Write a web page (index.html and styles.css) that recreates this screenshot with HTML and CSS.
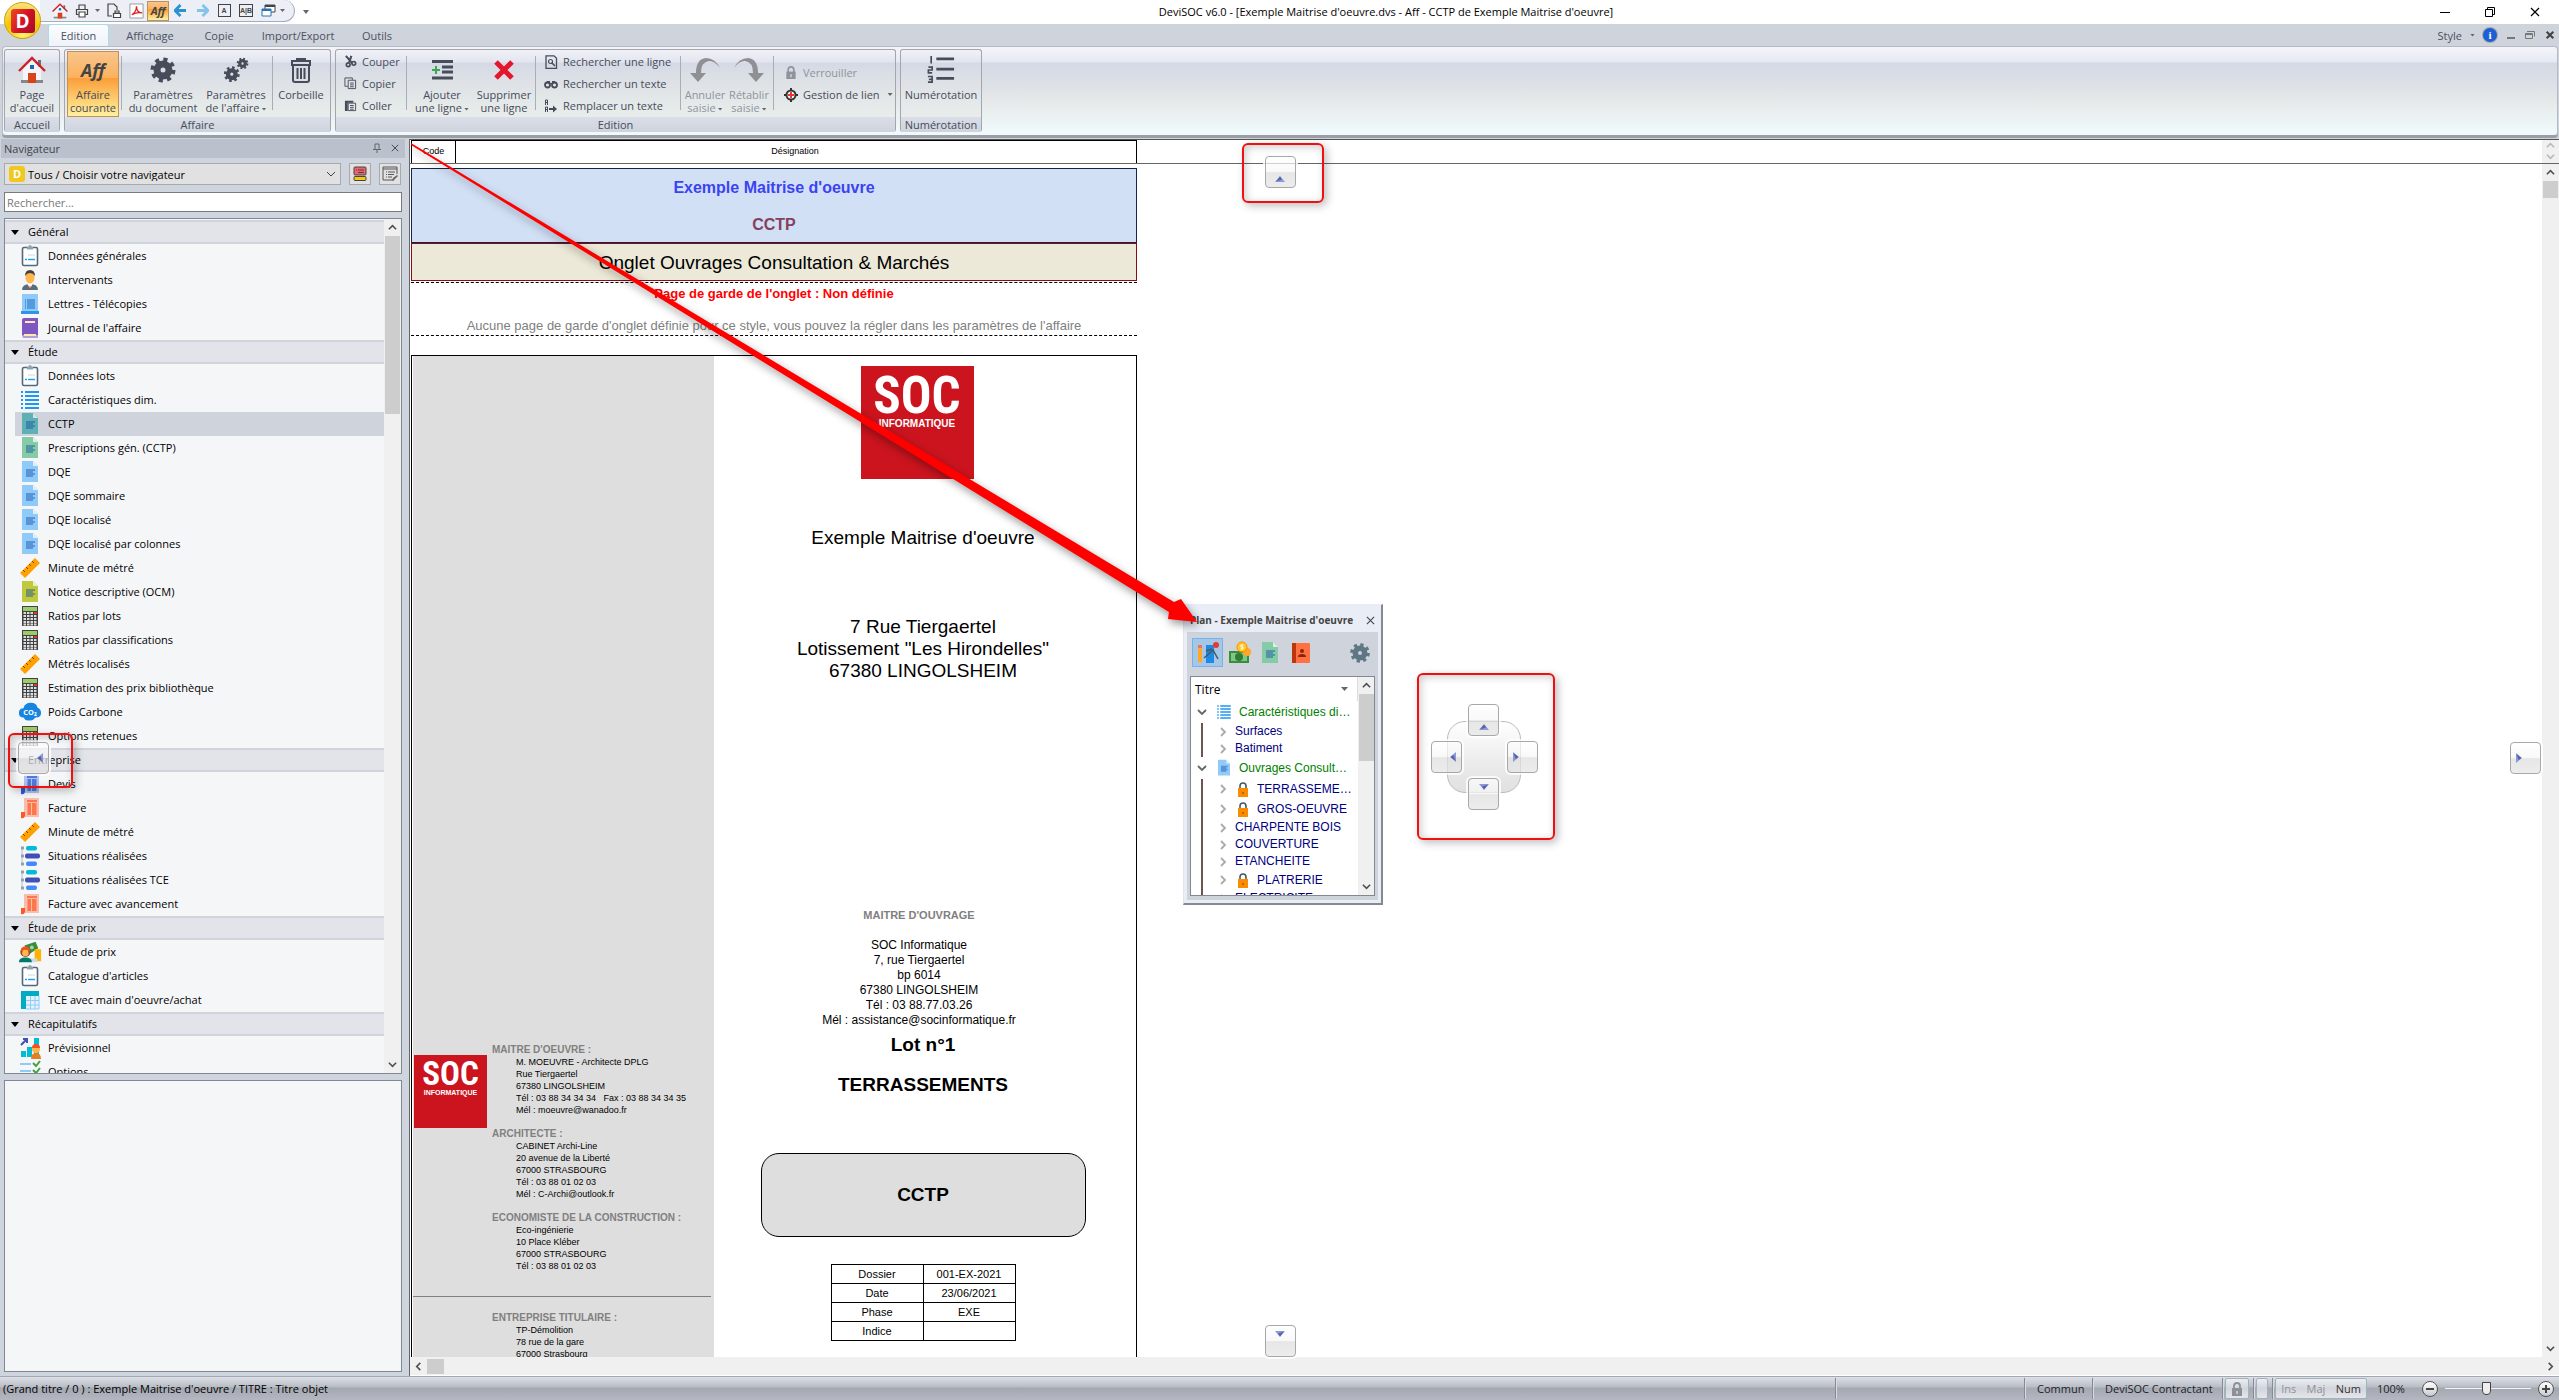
FILE: index.html
```html
<!DOCTYPE html>
<html lang="fr">
<head>
<meta charset="utf-8">
<meta name="viewport" content="width=device-width, initial-scale=1">
<title>DeviSOC v6.0</title>
<link rel="stylesheet" href="styles.css">
</head>
<body>
<svg class="sprite" aria-hidden="true">
  <symbol id="house" viewBox="0 0 28 28"><path d="M20 4h3v7h-3z" fill="#6b7078"/><path d="M5 13 14 4l9 9v12H5z" fill="#f4f5fb"/><path d="M3 24h22v3H3z" fill="#85878c"/><path d="M10 17h8v10h-8z" fill="#d9431a"/><path d="M12 9h4v4h-4z" fill="#1f66b5"/><path d="M1 15 14 2l13 13" fill="none" stroke="#cc2222" stroke-width="2.4"/></symbol>
  <symbol id="gear" viewBox="0 0 28 28"><circle cx="14" cy="14" r="10.5" fill="none" stroke="currentColor" stroke-width="4" stroke-dasharray="4.1 4.15"/><circle cx="14" cy="14" r="6" fill="none" stroke="currentColor" stroke-width="7"/></symbol>
  <symbol id="gears" viewBox="0 0 30 30"><use href="#gear" x="1" y="10" width="19" height="19"/><use href="#gear" x="15" y="1" width="14" height="14"/></symbol>
  <symbol id="bin" viewBox="0 0 24 26"><path d="M8 4V2h8v2M3 4h18v4H3zM4 8v15q0 2 2 2h12q2 0 2-2V8" fill="none" stroke="currentColor" stroke-width="2"/><path d="M8.500 11v11M12 11v11M15.500 11v11" stroke="currentColor" stroke-width="2"/></symbol>
  <symbol id="scissors" viewBox="0 0 14 14"><path d="M2 1l7 8M8 1 5.500 8" stroke="currentColor" stroke-width="2.200"/><circle cx="4.500" cy="10.500" r="2" fill="none" stroke="currentColor" stroke-width="1.800"/><circle cx="10.500" cy="9" r="2" fill="none" stroke="currentColor" stroke-width="1.800"/></symbol>
  <symbol id="copy" viewBox="0 0 14 14"><path d="M9 3V1H1v9h3" fill="none" stroke="currentColor"/><path d="M4.500 3.500h8v9h-8zM6.500 6.500h4M6.500 8.500h4M6.500 10.500h4" fill="none" stroke="currentColor"/></symbol>
  <symbol id="paste" viewBox="0 0 14 14"><path d="M1 2h9v2H4v9H1z" fill="currentColor"/><path d="M4.500 4.500h8v8h-8zM6.500 7h4M6.500 9h4M6.500 11h4" fill="none" stroke="currentColor"/></symbol>
  <symbol id="addline" viewBox="0 0 24 24"><path d="M2 3.500h21M12 9h11M12 14h11M2 20h21" stroke="currentColor" stroke-width="3"/><path d="M2 12h8M6 8v8" stroke="#3aa757" stroke-width="2"/></symbol>
  <symbol id="cross" viewBox="0 0 24 24"><path d="M4 4l16 16M20 4 4 20" stroke="#e3162c" stroke-width="5"/></symbol>
  <symbol id="findline" viewBox="0 0 14 14"><path d="M2 .8h8l2.500 2.500v10H2z" fill="none" stroke="currentColor" stroke-width="1.300"/><circle cx="6.500" cy="6.500" r="2" fill="none" stroke="currentColor" stroke-width="1.200"/><path d="M8 8l3 3" stroke="currentColor" stroke-width="1.500"/></symbol>
  <symbol id="binocular" viewBox="0 0 14 14"><circle cx="3.500" cy="8" r="2.500" fill="none" stroke="currentColor" stroke-width="1.800"/><circle cx="10.500" cy="8" r="2.500" fill="none" stroke="currentColor" stroke-width="1.800"/><path d="M3 4h3v3h2V4h3l1 2H2z" fill="currentColor"/></symbol>
  <symbol id="replace" viewBox="0 0 14 14"><path d="M1.500 6V1h2v5M1.500 3.500h2M1.500 13V8h2v5M1.500 10.500h2" fill="none" stroke="currentColor"/><path d="M5 9h4V6.500l4 3.500-4 3.500V11H5z" fill="currentColor"/></symbol>
  <symbol id="undo" viewBox="0 0 32 26"><path d="M31 11Q26 1 17 1 7 2 7 16H1l8 9 8-9h-5Q12 5 20 4q6 0 11 7z" fill="#8e9094"/></symbol>
  <symbol id="lock" viewBox="0 0 12 14"><path d="M1 6h10v8H1z" fill="currentColor"/><path d="M3 7V4q0-3 3-3t3 3v3" fill="none" stroke="currentColor" stroke-width="1.800"/><path d="M5.400 9h1.200v3H5.400z" fill="#e8eaee"/></symbol>
  <symbol id="padlock" viewBox="0 0 12 15"><path d="M3 7V4q0-3 3-3t3 3v3" fill="none" stroke="#455a64" stroke-width="1.600"/><path d="M1 6h10v9H1z" fill="#fb8c00"/><path d="M5 10h2v2H5z" fill="#c2600a"/></symbol>
  <symbol id="target" viewBox="0 0 14 14"><circle cx="7" cy="7" r="4.500" fill="#fff" stroke="#333" stroke-width="2"/><path d="M7 0v3M7 11v3M0 7h3M11 7h3" stroke="#333" stroke-width="2"/><path d="M7 4v6M4 7h6" stroke="#e33" stroke-width="2"/></symbol>
  <symbol id="number" viewBox="0 0 30 30"><path d="M10 3h19M10 14h19M10 24h19" stroke="currentColor" stroke-width="3"/><path d="M4.500 0v8M1.500 12h4v3h-4v3h4M1 22h4.500v6H1M2 25h3" stroke="currentColor" stroke-width="1.800" fill="none"/></symbol>
  <symbol id="printer" viewBox="0 0 14 14"><path d="M4 5V1h6v4M3.500 10.500H1.500v-5h11v5h-2" fill="none" stroke="#444" stroke-width="1.200"/><path d="M4 8h6v5H4z" fill="#fff" stroke="#444" stroke-width="1.200"/></symbol>
  <symbol id="pageprint" viewBox="0 0 16 16"><path d="M6 13H2V1h6l3 3v3" fill="none" stroke="#444" stroke-width="1.200"/><path d="M7.500 10.500h7v4h-7zM9 8h4v2H9z" fill="#fff" stroke="#444" stroke-width="1.200"/></symbol>
  <symbol id="pdf" viewBox="0 0 16 16"><path d="M1 .5h14v15H1z" fill="#fff" stroke="#999"/><path d="M3 12q5-3 5-9 0 7 6 7-6-1-11 2z" fill="none" stroke="#d22" stroke-width="1.400"/></symbol>
  <symbol id="arrow" viewBox="0 0 14 14"><path d="M7 1 1 7l6 6M1.500 7H13" fill="none" stroke="currentColor" stroke-width="3"/></symbol>
  <symbol id="windows" viewBox="0 0 15 14"><path d="M4 1h10v7H4z" fill="#fff" stroke="#444"/><path d="M4 1h10v2H4z" fill="#444"/><path d="M1 5h9v7H1z" fill="#fff" stroke="#2d72b0"/><path d="M1 5h9v2H1z" fill="#2d72b0"/></symbol>
  <symbol id="clip" viewBox="0 0 24 24"><rect x="4.500" y="3.500" width="15" height="18" rx="1.500" fill="#fff" stroke="#546a79" stroke-width="1.600"/><path d="M9 3h6v2.500H9z" fill="#90a4ae"/><circle cx="12" cy="2.500" r="1.600" fill="#90a4ae"/><path d="M10 11h7" stroke="#cfd8dc"/><path d="M7 15.500h2M10 15.500h7" stroke="#1ea4ee" stroke-width="1.500"/></symbol>
  <symbol id="person" viewBox="0 0 24 24"><path d="M4 22q0-6 8-6t8 6z" fill="#546e7a"/><path d="M9.500 16h5L12 21z" fill="#fff"/><path d="M12 17l1 4h-2z" fill="#d33"/><ellipse cx="12" cy="9.500" rx="4.500" ry="6" fill="#ffb74d"/><path d="M7 8q0-6 5-6t5 6q-2-3-5-3T7 8z" fill="#424242"/></symbol>
  <symbol id="letter" viewBox="0 0 24 24"><path d="M4 2h16v19H4z" fill="#90caf9"/><path d="M7 7h1v10H7zM9 7h8v10H9z" fill="#549ade"/><path d="M3 19h18v3H3z" fill="#2e93ee"/></symbol>
  <symbol id="book" viewBox="0 0 24 24"><path d="M4 4q0-2 2-2h14v17H4z" fill="#7e57c2"/><path d="M4 19h16v3H5z" fill="#b39ddb"/><path d="M7 5h10v2H7zM6 18h12v2H6z" fill="#ffe9b0"/></symbol>
  <symbol id="list" viewBox="0 0 24 24"><path d="M3 4h2M7 4h14M3 8h2M7 8h14M3 12h2M7 12h14M3 16h2M7 16h14M3 20h2M7 20h14" stroke="#2196f3" stroke-width="2"/></symbol>
  <symbol id="doc" viewBox="0 0 24 24"><path d="M4 1h11l5 5v16H4z" fill="currentColor"/><path d="M15 1l5 5h-5z" fill="#fff" opacity=".7"/><path d="M8 9h9v2h-2v2h2v2h-2v2H8z" fill="#0d4aa8" opacity=".42"/></symbol>
  <symbol id="ruler" viewBox="0 0 24 24"><path d="M2 17 17 2l5 5L7 22z" fill="#ffa000"/><path d="M5 14l2 2M8 11l2 2M11 8l2 2M14 5l2 2" stroke="#7a4a00"/></symbol>
  <symbol id="calc" viewBox="0 0 24 24"><path d="M4 2h16v20H4z" fill="#424242"/><path d="M5 3h14v4H5z" fill="#9ccc65"/><path d="M5.500 9h13M5.500 12h13M5.500 15h13M5.500 18h13M5.500 20.500h13" stroke="#ddd" stroke-width="2" stroke-dasharray="2.500 1"/><path d="M16 8h3v2h-3z" fill="#e53935"/></symbol>
  <symbol id="cloud" viewBox="0 0 26 24"><path d="M6 18q-5 0-5-5t5-5q1-6 8-6 6 0 7 5 4 2 4 6 0 5-6 5-3 4-7 3-4 1-6-3z" fill="#1686e0"/><text x="13" y="15" font-size="8" font-weight="bold" fill="#fff" text-anchor="middle">CO₂</text></symbol>
  <symbol id="bill" viewBox="0 0 24 24"><path d="M6 2h15v19H6z" fill="currentColor" opacity=".35"/><path d="M9 4h10v2H9zM9.500 7H13v12H9.500zM14 7h4.500v12H14z" fill="currentColor" opacity=".7"/><path d="M3 16h4v4q-1 3-4 2z" fill="currentColor"/></symbol>
  <symbol id="situation" viewBox="0 0 24 24"><path d="M4 4v16" stroke="#b0bec5"/><path d="M3 4h3M3 12h3M3 20h3" stroke="#90a4ae" stroke-width="3"/><rect x="8" y="2" width="11" height="4.500" rx="2" fill="#00bcd4"/><rect x="7" y="9.500" width="15" height="5" rx="2" fill="#3f51b5"/><rect x="8" y="17.500" width="11" height="4.500" rx="2" fill="#448aff"/></symbol>
  <symbol id="price" viewBox="0 0 26 24"><path d="M7 5l12-4 3 7-11 7z" fill="#388e3c"/><circle cx="15" cy="7" r="2" fill="#a5d6a7"/><path d="M18 9h7v13h-7z" fill="#ffb300"/><path d="M12 19h9v4h-9z" fill="#cfd8dc"/><circle cx="8" cy="12" r="5.500" fill="#8d4a24"/><path d="M3 11q0-5 5-5t5 5z" fill="#f4511e"/><circle cx="8" cy="13" r="3.500" fill="#ffb74d"/><path d="M1 23q0-5 7-5t7 5z" fill="#00796b"/></symbol>
  <symbol id="grid" viewBox="0 0 24 24"><path d="M3 3h18v18H3z" fill="#e3f2fd"/><path d="M3 3h18v5H8v13H3z" fill="#00acc1"/><path d="M12.500 8v13M17 8v13M8 12.500h13M8 17h13M21 8v13H8" stroke="#90caf9" fill="none"/></symbol>
  <symbol id="forecast" viewBox="0 0 24 24"><path d="M3 15h5v6H3zM9 11h5v10H9zM16 2h5v19h-5z" fill="#00bcd4"/><path d="M3 9l5-5M5 3h4v4" stroke="#3f51b5" stroke-width="2" fill="none"/><circle cx="18" cy="13" r="4" fill="#ffb74d"/><path d="M14 12q0-4 4-4t4 4z" fill="#f4511e"/><path d="M13 23q0-6 5-6t5 6z" fill="#e67e22"/></symbol>
  <symbol id="checks" viewBox="0 0 24 24"><path d="M2 4h11M2 11h11M2 18h11" stroke="#90caf9" stroke-width="2"/><path d="M15 3l3 3 4-5M15 10l3 3 4-5" stroke="#43a047" stroke-width="2" fill="none"/></symbol>
  <symbol id="chevron" viewBox="0 0 10 10"><path d="M1 3l4 4 4-4" fill="none" stroke="currentColor" stroke-width="1.800"/></symbol>
  <symbol id="close" viewBox="0 0 10 10"><path d="M1 1l8 8M9 1 1 9" stroke="currentColor" stroke-width="1.200"/></symbol>
  <symbol id="tri" viewBox="0 0 12 8"><path d="M1 7l5-6 5 6z" fill="#8b98dc"/><path d="M2 6.500 6 1.500l2 3z" fill="#5a63a0"/></symbol>
</svg>

<div class="app">
  <header class="titlebar">
    <button class="orb" aria-label="Menu DeviSOC"><span>D</span></button>
    <div class="quick">
      <button aria-label="Accueil"><svg width="16" height="16"><use href="#house"/></svg></button>
      <button aria-label="Imprimer"><svg width="14" height="14"><use href="#printer"/></svg></button>
      <i class="caret slot"></i>
      <button aria-label="Aperçu"><svg width="16" height="16"><use href="#pageprint"/></svg></button>
      <button aria-label="PDF"><svg width="15" height="16"><use href="#pdf"/></svg></button>
      <button class="hot aff-small">Aff</button>
      <button class="blue" aria-label="Précédent"><svg width="13" height="13"><use href="#arrow"/></svg></button>
      <button class="pale" aria-label="Suivant"><svg width="13" height="13" class="flip"><use href="#arrow"/></svg></button>
      <button><span class="framed">A</span></button>
      <button><span class="framed">A|B</span></button>
      <button aria-label="Fenêtres"><svg width="15" height="14"><use href="#windows"/></svg></button>
      <i class="caret"></i>
    </div>
    <i class="caret customise"></i>
    <h1>DeviSOC v6.0 - [Exemple Maitrise d'oeuvre.dvs - Aff - CCTP de Exemple Maitrise d'oeuvre]</h1>
    <div class="wincontrols">
      <button aria-label="Réduire"><svg width="10" height="10"><path d="M0 5.500h10" stroke="#000"/></svg></button>
      <button aria-label="Restaurer"><svg width="10" height="10"><path d="M.5 2.500h7v7h-7zM2.500 2V.5h7v7H8" fill="none" stroke="#000"/></svg></button>
      <button aria-label="Fermer"><svg width="10" height="10"><use href="#close"/></svg></button>
    </div>
  </header>

  <nav class="tabs">
    <button class="tab active">Edition</button><button class="tab">Affichage</button><button class="tab">Copie</button><button class="tab">Import/Export</button><button class="tab">Outils</button>
    <div class="tabtools">
      <button>Style</button><i class="caret"></i><span class="info">i</span>
      <svg width="8" height="10"><path d="M0 8h8" stroke="#777" stroke-width="2"/></svg>
      <svg width="10" height="10"><path d="M.5 3.500h7v5h-7zM2 1.500h7.500v5M.5 4.500h7" fill="none" stroke="#777"/></svg>
      <svg width="10" height="10" class="grey"><use href="#cross"/></svg>
    </div>
  </nav>

  <section class="ribbon">
    <div class="panel p-home">
      <div class="tools"><button class="big"><span class="ico"><svg width="28" height="28"><use href="#house"/></svg></span><span>Page<br>d'accueil</span></button></div>
      <h2>Accueil</h2>
    </div>
    <div class="panel p-affair">
      <div class="tools">
        <button class="big hot w-52"><span class="ico aff">Aff</span><span>Affaire<br>courante</span></button><i class="sep"></i>
        <button class="big w-78"><span class="ico"><svg width="28" height="28"><use href="#gear"/></svg></span><span>Paramètres<br>du document</span></button>
        <button class="big w-68"><span class="ico"><svg width="28" height="28"><use href="#gears"/></svg></span><span>Paramètres<br>de l'affaire<i class="caret"></i></span></button><i class="sep"></i>
        <button class="big w-52"><span class="ico"><svg width="24" height="26"><use href="#bin"/></svg></span><span>Corbeille</span></button>
      </div>
      <h2>Affaire</h2>
    </div>
    <div class="panel p-edit">
      <div class="tools">
        <div class="stack w-66">
          <button><svg width="13" height="13"><use href="#scissors"/></svg>Couper</button>
          <button><svg width="13" height="13"><use href="#copy"/></svg>Copier</button>
          <button><svg width="13" height="13"><use href="#paste"/></svg>Coller</button>
        </div><i class="sep"></i>
        <button class="big w-66"><span class="ico"><svg width="24" height="24"><use href="#addline"/></svg></span><span>Ajouter<br>une ligne<i class="caret"></i></span></button>
        <button class="big w-58"><span class="ico"><svg width="24" height="24"><use href="#cross"/></svg></span><span>Supprimer<br>une ligne</span></button><i class="sep"></i>
        <div class="stack find">
          <button><svg width="14" height="14"><use href="#findline"/></svg>Rechercher une ligne</button>
          <button><svg width="14" height="14"><use href="#binocular"/></svg>Rechercher un texte</button>
          <button><svg width="14" height="14"><use href="#replace"/></svg>Remplacer un texte</button>
        </div><i class="sep"></i>
        <button class="big off w-44" disabled><span class="ico"><svg width="32" height="26"><use href="#undo"/></svg></span><span>Annuler<br>saisie<i class="caret"></i></span></button>
        <button class="big off w-44" disabled><span class="ico"><svg width="32" height="26" class="flip"><use href="#undo"/></svg></span><span>Rétablir<br>saisie<i class="caret"></i></span></button><i class="sep"></i>
        <div class="stack mid">
          <button class="off" disabled><svg width="14" height="13"><use href="#lock"/></svg>Verrouiller</button>
          <button><svg width="14" height="14"><use href="#target"/></svg>Gestion de lien<i class="caret"></i></button>
        </div>
      </div>
      <h2>Edition</h2>
    </div>
    <div class="panel p-num">
      <div class="tools"><button class="big"><span class="ico"><svg width="30" height="28"><use href="#number"/></svg></span><span>Numérotation</span></button></div>
      <h2>Numérotation</h2>
    </div>
  </section>

  <main class="main">
    <aside class="nav">
      <header class="nav-title"><span>Navigateur</span>
        <svg width="8" height="10"><path d="M2 1h4v5M2 1v5M0 6.500h8M4 7v3" fill="none" stroke="#666"/></svg>
        <svg width="8" height="8"><use href="#close"/></svg></header>
      <div class="picker">
        <label class="combo"><span class="d-badge">D</span>
          <select aria-label="Navigateur"><option>Tous / Choisir votre navigateur</option></select>
          <svg width="9" height="9"><path d="M0 2l4 4 4-4" fill="none" stroke="#444"/></svg></label>
        <button aria-label="Blocs"><svg width="14" height="16"><rect x="1" y="1" width="12" height="8" rx="1" fill="#f4606c" stroke="#444"/><path d="M3 4h1M5 4h6M5 6.500h6" stroke="#444"/><rect x="1" y="10.500" width="12" height="4" rx="1" fill="#f5c518" stroke="#444"/></svg></button>
        <button aria-label="Modifier"><svg width="17" height="16"><path d="M12 14H1V1h14v7M1 3h14M4 6h1M6 6h7M4 8.500h1M6 8.500h6M4 11h1M6 11h4" fill="none" stroke="#555"/><path d="M10 15l1-3 4-3 1 1-4 4z" fill="#666"/></svg></button>
      </div>
      <input class="search" type="search" placeholder="Rechercher..." aria-label="Rechercher">
      <div class="tree">
        <div class="tree-list">
          <button class="group">Général</button>
          <a href="#"><svg><use href="#clip"/></svg>Données générales</a>
          <a href="#"><svg><use href="#person"/></svg>Intervenants</a>
          <a href="#"><svg><use href="#letter"/></svg>Lettres - Télécopies</a>
          <a href="#"><svg><use href="#book"/></svg>Journal de l'affaire</a>
          <button class="group">Étude</button>
          <a href="#"><svg><use href="#clip"/></svg>Données lots</a>
          <a href="#"><svg><use href="#list"/></svg>Caractéristiques dim.</a>
          <a href="#" class="selected"><svg class="teal"><use href="#doc"/></svg>CCTP</a>
          <a href="#"><svg class="green"><use href="#doc"/></svg>Prescriptions gén. (CCTP)</a>
          <a href="#"><svg class="sky"><use href="#doc"/></svg>DQE</a>
          <a href="#"><svg class="sky"><use href="#doc"/></svg>DQE sommaire</a>
          <a href="#"><svg class="sky"><use href="#doc"/></svg>DQE localisé</a>
          <a href="#"><svg class="sky"><use href="#doc"/></svg>DQE localisé par colonnes</a>
          <a href="#"><svg><use href="#ruler"/></svg>Minute de métré</a>
          <a href="#"><svg class="lime"><use href="#doc"/></svg>Notice descriptive (OCM)</a>
          <a href="#"><svg><use href="#calc"/></svg>Ratios par lots</a>
          <a href="#"><svg><use href="#calc"/></svg>Ratios par classifications</a>
          <a href="#"><svg><use href="#ruler"/></svg>Métrés localisés</a>
          <a href="#"><svg><use href="#calc"/></svg>Estimation des prix bibliothèque</a>
          <a href="#"><svg><use href="#cloud"/></svg>Poids Carbone</a>
          <a href="#"><svg><use href="#calc"/></svg>Options retenues</a>
          <button class="group">Entreprise</button>
          <a href="#"><svg class="indigo"><use href="#bill"/></svg>Devis</a>
          <a href="#"><svg class="orange"><use href="#bill"/></svg>Facture</a>
          <a href="#"><svg><use href="#ruler"/></svg>Minute de métré</a>
          <a href="#"><svg><use href="#situation"/></svg>Situations réalisées</a>
          <a href="#"><svg><use href="#situation"/></svg>Situations réalisées TCE</a>
          <a href="#"><svg class="orange"><use href="#bill"/></svg>Facture avec avancement</a>
          <button class="group">Étude de prix</button>
          <a href="#"><svg><use href="#price"/></svg>Étude de prix</a>
          <a href="#"><svg><use href="#clip"/></svg>Catalogue d'articles</a>
          <a href="#"><svg><use href="#grid"/></svg>TCE avec main d'oeuvre/achat</a>
          <button class="group">Récapitulatifs</button>
          <a href="#"><svg><use href="#forecast"/></svg>Prévisionnel</a>
          <a href="#"><svg><use href="#checks"/></svg>Options</a>
        </div>
        <div class="vbar"><svg class="up"><use href="#chevron"/></svg><i class="thumb tall"></i><svg class="end"><use href="#chevron"/></svg></div>
      </div>
      <div class="blank"></div>
    </aside>

    <section class="doc">
      <div class="colhead"><div class="cols"><span class="code">Code</span><span class="desig">Désignation</span></div>
        <div class="vbar dim"><svg class="up"><use href="#chevron"/></svg><svg><use href="#chevron"/></svg></div></div>
      <div class="docbody">
        <div class="paper">
          <div class="banner"><p>Exemple Maitrise d'oeuvre</p><p class="plum">CCTP</p></div>
          <div class="onglet">Onglet Ouvrages Consultation &amp; Marchés</div>
          <div class="garde"><p class="red">Page de garde de l'onglet : Non définie</p><p>Aucune page de garde d'onglet définie pour ce style, vous pouvez la régler dans les paramètres de l'affaire</p></div>
          <article class="cover">
            <div class="credits">
              <div class="logo small"><b>SOC</b><span>INFORMATIQUE</span></div>
              <div class="parties">
                <h3>MAITRE D'OEUVRE :</h3>
                <p>M. MOEUVRE - Architecte DPLG<br>Rue Tiergaertel<br>67380 LINGOLSHEIM<br>Tél : 03 88 34 34 34 &nbsp; Fax : 03 88 34 34 35<br>Mél : moeuvre@wanadoo.fr</p>
                <h3>ARCHITECTE :</h3>
                <p>CABINET Archi-Line<br>20 avenue de la Liberté<br>67000 STRASBOURG<br>Tél : 03 88 01 02 03<br>Mél : C-Archi@outlook.fr</p>
                <h3>ECONOMISTE DE LA CONSTRUCTION :</h3>
                <p>Eco-ingénierie<br>10 Place Kléber<br>67000 STRASBOURG<br>Tél : 03 88 01 02 03</p>
              </div>
              <div class="parties holder">
                <h3>ENTREPRISE TITULAIRE :</h3>
                <p>TP-Démolition<br>78 rue de la gare<br>67000 Strasbourg</p>
              </div>
            </div>
            <div class="front">
              <div class="logo"><b>SOC</b><span>INFORMATIQUE</span></div>
              <p class="large name">Exemple Maitrise d'oeuvre</p>
              <p class="large address">7 Rue Tiergaertel<br>Lotissement "Les Hirondelles"<br>67380 LINGOLSHEIM</p>
              <h3>MAITRE D'OUVRAGE</h3>
              <p class="owner">SOC Informatique<br>7, rue Tiergaertel<br>bp 6014<br>67380 LINGOLSHEIM<br>Tél : 03 88.77.03.26<br>Mél : assistance@socinformatique.fr</p>
              <p class="large strong lot">Lot n°1</p>
              <p class="large strong">TERRASSEMENTS</p>
              <div class="large strong stamp">CCTP</div>
              <table><tr><th>Dossier</th><td>001-EX-2021</td></tr><tr><th>Date</th><td>23/06/2021</td></tr><tr><th>Phase</th><td>EXE</td></tr><tr><th>Indice</th><td></td></tr></table>
            </div>
          </article>
        </div>
        <div class="vbar"><svg class="up"><use href="#chevron"/></svg><i class="thumb short"></i><svg class="end"><use href="#chevron"/></svg></div>
      </div>
      <div class="hbar"><svg class="left"><use href="#chevron"/></svg><i></i><svg class="right end"><use href="#chevron"/></svg></div>
    </section>

    <aside class="plan">
      <header><h2>Plan - Exemple Maitrise d'oeuvre</h2><svg width="9" height="9"><use href="#close"/></svg></header>
      <div class="plan-body">
        <div class="plan-tools">
          <button class="on" aria-label="Métrés"><svg width="24" height="24"><path d="M2 6h4v15H2z" fill="#ffa726"/><path d="M2 4h4v3H2z" fill="#e57373"/><path d="M10 4h8v18h-8z" fill="#1e88e5"/><path d="M8 17l9-8 5 9M10 10l6-2" stroke="#455a64" stroke-width="1.500" fill="none"/><circle cx="20" cy="4" r="3" fill="#e53935"/></svg></button>
          <button aria-label="Prix"><svg width="24" height="24"><path d="M2 10h20v12H2z" fill="#388e3c"/><path d="M4 12h16v8H4z" fill="#81c784"/><circle cx="12" cy="16" r="4" fill="#2e7d32"/><circle cx="20" cy="11" r="4" fill="#ffa726"/><circle cx="15" cy="6" r="5" fill="#ffca28" stroke="#fb8c00"/><path d="M14 4h2.500M14 4v2h2v2h-2.500" stroke="#fff" fill="none"/></svg></button>
          <button class="green" aria-label="CCTP"><svg width="24" height="24"><use href="#doc"/></svg></button>
          <button aria-label="Contacts"><svg width="22" height="22"><rect x="2" y="1" width="18" height="20" rx="1" fill="#ff7043"/><path d="M2 1h4v20H2z" fill="#bf360c"/><circle cx="12" cy="9" r="2" fill="#8e2407"/><path d="M8 15q0-3 4-3t4 3z" fill="#8e2407"/></svg></button>
          <button class="setup" aria-label="Réglages"><svg width="22" height="22"><use href="#gear"/></svg></button>
        </div>
        <div class="plan-tree">
          <div class="plan-list">
            <div class="plan-head">Titre<i class="caret"></i></div>
            <div class="node root"><svg class="exp"><use href="#chevron"/></svg><svg class="pic"><use href="#list"/></svg>Caractéristiques di…</div>
            <div class="kids">
              <div class="node"><svg class="exp"><use href="#chevron"/></svg>Surfaces</div>
              <div class="node"><svg class="exp"><use href="#chevron"/></svg>Batiment</div>
            </div>
            <div class="node root"><svg class="exp"><use href="#chevron"/></svg><svg class="pic sky"><use href="#doc"/></svg>Ouvrages Consult…</div>
            <div class="kids">
              <div class="node locked"><svg class="exp"><use href="#chevron"/></svg><svg class="padlock"><use href="#padlock"/></svg>TERRASSEME…</div>
              <div class="node locked"><svg class="exp"><use href="#chevron"/></svg><svg class="padlock"><use href="#padlock"/></svg>GROS-OEUVRE</div>
              <div class="node"><svg class="exp"><use href="#chevron"/></svg>CHARPENTE BOIS</div>
              <div class="node"><svg class="exp"><use href="#chevron"/></svg>COUVERTURE</div>
              <div class="node"><svg class="exp"><use href="#chevron"/></svg>ETANCHEITE</div>
              <div class="node locked"><svg class="exp"><use href="#chevron"/></svg><svg class="padlock"><use href="#padlock"/></svg>PLATRERIE</div>
              <div class="node"><svg class="exp"><use href="#chevron"/></svg>ELECTRICITE</div>
            </div>
          </div>
          <div class="vbar"><svg class="up"><use href="#chevron"/></svg><i class="thumb medium"></i><svg class="end"><use href="#chevron"/></svg></div>
        </div>
      </div>
    </aside>

    <button class="guide g-top" aria-label="Ancrer en haut"><svg><use href="#tri"/></svg></button>
    <button class="guide g-bottom" aria-label="Ancrer en bas"><svg><use href="#tri"/></svg></button>
    <button class="guide g-left" aria-label="Ancrer à gauche"><svg><use href="#tri"/></svg></button>
    <button class="guide g-right" aria-label="Ancrer à droite"><svg><use href="#tri"/></svg></button>
    <div class="mark m-top"></div>
    <div class="mark m-left"></div>
    <div class="mark m-cross">
      <div class="compass">
        <button class="guide c-up" aria-label="Haut"><svg><use href="#tri"/></svg></button>
        <button class="guide c-left" aria-label="Gauche"><svg><use href="#tri"/></svg></button>
        <button class="guide c-right" aria-label="Droite"><svg><use href="#tri"/></svg></button>
        <button class="guide c-down" aria-label="Bas"><svg><use href="#tri"/></svg></button>
      </div>
    </div>
    <svg class="pointer" width="1240" height="520" aria-hidden="true"><path d="M411 4 1174 463 1181 460 1197 483 1168 480 1169 473 411 6z" fill="#f00"/></svg>
  </main>

  <footer class="status">
    <span class="msg">(Grand titre / 0 ) : Exemple Maitrise d'oeuvre / TITRE : Titre objet</span>
    <span class="cell spare"></span>
    <span class="cell commun">Commun</span>
    <span class="cell role">DeviSOC Contractant</span>
    <span class="cell chips"><i class="chip lockchip"><svg width="12" height="14"><use href="#lock"/></svg></i></span>
    <span class="cell chips"><i class="chip empty"></i></span>
    <span class="cell chips"><i class="chip keys"><span>Ins</span><span>Maj</span><span class="lit">Num</span></i></span>
    <span class="pct">100%</span>
    <button class="round" aria-label="Zoom arrière"><svg width="10" height="10"><path d="M1 5h8" stroke="#444" stroke-width="2"/></svg></button>
    <input class="zoom" type="range" aria-label="Zoom" min="0" max="100" value="48">
    <button class="round" aria-label="Zoom avant"><svg width="10" height="10"><path d="M1 5h8M5 1v8" stroke="#444" stroke-width="2"/></svg></button>
  </footer>
</div>
</body>
</html>
```
FILE: styles.css
```css
* { box-sizing: border-box; }
body { margin: 0; font: 11px/13px "Open Sans", "Noto Sans", sans-serif; color: #000; }
h1, h2, h3, p { margin: 0; font-size: inherit; }
h1, h2 { font-weight: normal; }
button { margin: 0; padding: 0; border: 0; background: none; font: inherit; color: inherit; }
i { font-style: normal; }
svg { display: block; flex: none; }
.sprite { position: absolute; width: 0; height: 0; }
.app { display: flex; flex-direction: column; height: 100vh; overflow: hidden; background: #cfd3dc; }

.caret { display: inline-block; flex: none; width: 5px; height: 3px; margin-left: 3px; background: #666; clip-path: polygon(0 0, 100% 0, 50% 100%); vertical-align: middle; }
.flip { transform: scaleX(-1); }
.teal { color: #5fb0b5; }
.green { color: #86cba6; }
.sky { color: #90caf9; }
.lime { color: #c0c93c; }
.indigo { color: #2a5bd7; }
.orange { color: #ff5722; }
.hot { background: linear-gradient(#f9c48c, #fbb25e 40%, #fb9d38 41%, #fdd77a 80%, #fff0a0); border: 1px solid #c09058; }

/* Title bar */
.titlebar { position: relative; display: flex; align-items: center; flex: none; height: 24px; background: #fff; }
.orb { position: absolute; z-index: 2; left: 4px; top: 2px; width: 37px; height: 37px; border-radius: 50%; border: 1px solid #c8a200; background: radial-gradient(circle at 50% 90%, #fff27a, #f4c400 45%, #f9df6a 80%, #fff6c8); display: grid; place-items: center; }
.orb span { width: 24px; height: 24px; border-radius: 3px; background: linear-gradient(120deg, #f04a1c, #d01028 55%, #a00c2c); color: #fff; font: bold 19px/24px "Open Sans", sans-serif; }
.quick { display: flex; align-items: center; align-self: flex-start; height: 22px; width: 255px; margin-left: 40px; padding-left: 9px; background: #eceff5; border: 1px solid #a5abb8; border-left: 0; border-top: 0; border-radius: 0 11px 11px 0; }
.quick button { display: grid; place-items: center; flex: none; width: 22px; height: 20px; }
.slot { margin: 0 3px 0 2px; }
.quick .caret:last-child { margin-left: 1px; }
.aff-small, .aff { font-style: italic; font-weight: bold; color: #444; }
.blue { color: #2c93d0; }
.pale { color: #84c4e8; }
.framed { display: block; min-width: 13px; border: 1px solid #444; font: bold 7px/11px "Liberation Sans", sans-serif; text-align: center; color: #444; }
.customise { width: 6px; height: 4px; margin-left: 8px; }
.titlebar h1 { flex: 1; text-align: center; font-size: 11px; margin: 0 223px 0 127px; padding-bottom: 2px; }
.wincontrols { display: flex; gap: 35px; position: absolute; right: 19px; }

/* Tabs */
.tabs { display: flex; align-items: flex-end; flex: none; height: 22px; padding-left: 48px; color: #4c5160; }
.tab { height: 21px; width: 56px; }
.tab:nth-child(1) { width: 61px; }
.tab:nth-child(2) { width: 82px; }
.tab:nth-child(4) { width: 102px; }
.tab.active { height: 22px; background: linear-gradient(#fbfcfe, #eef3fa); border: 1px solid #a9dce6; border-bottom: 0; border-radius: 3px 3px 0 0; }
.tabtools { display: flex; align-items: center; gap: 10px; margin-left: auto; margin-right: 4px; height: 22px; }
.tabtools .caret { margin-left: -2px; }
.info { width: 14px; height: 14px; margin-left: -2px; border-radius: 50%; background: #1d5fd6; box-shadow: 0 0 0 1px #aaa; color: #fff; font: bold 11px/14px "Liberation Serif", serif; text-align: center; }
.grey { filter: grayscale(1); }

/* Ribbon */
.ribbon { display: flex; gap: 4px; flex: none; height: 90px; margin: 0 1px 3px 2px; padding: 2px 2px 3px 1px; border: 1px solid #c0c4cc; border-color: #b6bac4 #b6bac4 #9a9da6; border-radius: 4px; background: linear-gradient(#f4f5fa, #e6e9f2 15px, #d4d9e5 16px, #d9dde6 30px, #e6e9e9 55px, #f0f9fb 85px); color: #474b5a; box-shadow: 0 2px 0 #9c9ea6; }
.panel { display: flex; flex-direction: column; border: 1px solid #a3a6ad; border-bottom-color: #85878d; border-radius: 3px; background: linear-gradient(#f1f2f8, #e2e5ee 12px, #d4d9e5 13px, #dde1e6 30px, #e8edeb 66px); }
.p-home { width: 56px; }
.p-affair { width: 267px; }
.p-edit { width: 561px; }
.p-num { width: 82px; }
.panel h2 { height: 15px; line-height: 15px; text-align: center; background: linear-gradient(#d9dee8, #cfd3dc); }
.tools { display: flex; align-items: flex-start; justify-content: center; flex: 1; padding: 1px 2px 0; }
.p-affair .tools, .p-edit .tools { justify-content: flex-start; }
.big { display: flex; flex-direction: column; align-items: center; white-space: nowrap; flex: none; height: 66px; border: 1px solid transparent; }
.big.hot { border-color: #c09058; }
.ico { display: grid; place-items: center; height: 36px; }
.big .caret { margin-left: 2px; }
.aff { font-size: 18px; line-height: 20px; }
.sep { width: 1px; height: 54px; margin: 5px 2px 0; background: #a9adb6; }
.w-52 { width: 52px; }
.w-78 { width: 78px; }
.w-68 { width: 68px; }
.w-66 { width: 66px; }
.w-58 { width: 58px; }
.w-44 { width: 44px; }
.stack { display: flex; flex-direction: column; flex: none; height: 66px; padding-left: 6px; }
.stack.find { width: 140px; }
.stack button { display: flex; align-items: center; gap: 5px; height: 22px; padding-bottom: 1px; white-space: nowrap; }
.stack.mid { justify-content: center; padding-left: 8px; }
.off { color: #8f939c; }

/* Main area */
.main { position: relative; display: flex; flex: 1; min-height: 0; }
.nav { display: flex; flex-direction: column; flex: none; width: 410px; border-right: 1px solid #666; padding-bottom: 4px; background: #cfd5df; }
.nav-title { display: flex; align-items: center; gap: 10px; flex: none; height: 19px; margin: 0 4px 5px 1px; padding: 0 6px 1px 3px; background: #bac1cd; color: #444; }
.nav-title span { flex: 1; }
.picker { display: flex; gap: 8px; flex: none; height: 22px; margin: 0 8px 7px 4px; }
.picker > button { display: grid; place-items: center; width: 22px; border: 1px solid #a9a9a9; background: #e1e1e1; }
.combo { position: relative; display: flex; align-items: center; flex: 1; border: 1px solid #a9a9a9; background: #e1e1e1; padding: 0 4px; }
.combo select { flex: 1; appearance: none; border: 0; background: none; font: inherit; color: #000; padding: 0 3px; }
.d-badge { width: 16px; height: 16px; border-radius: 3px; background: #f0c820; color: #fff; font: bold 11px/16px "Open Sans", sans-serif; text-align: center; }
.search { flex: none; appearance: none; height: 20px; margin: 0 7px 6px 4px; padding: 0 2px; border: 1px solid #7a7a7a; background: #fff; font: inherit; }
.search::placeholder { color: #777; }
.tree, .blank { margin: 0 7px 0 4px; border: 1px solid #828790; background: #f5f6f8; }
.tree { display: flex; flex: 1; min-height: 0; }
.blank { flex: none; height: 292px; margin-top: 6px; }
.tree-list { flex: 1; overflow: hidden; padding-top: 1px; }
.tree-list a { display: flex; align-items: center; gap: 6px; height: 24px; margin-left: 10px; padding: 0 0 1px 3px; color: #000; text-decoration: none; }
.tree-list a svg { width: 24px; height: 24px; }
.tree-list .selected { background: #cfd3dc; }
.group { position: relative; display: block; width: 100%; height: 24px; padding: 0 0 1px 23px; border: solid #cfd3dc; border-width: 2px 0; background: #e3e4ea; text-align: left; }
.group::before { content: ""; position: absolute; left: 6px; top: 8px; width: 8px; height: 5px; background: #000; clip-path: polygon(0 0, 100% 0, 50% 100%); }

.vbar { display: flex; flex-direction: column; align-items: center; flex: none; width: 17px; background: #f0f0f0; color: #505050; }
.vbar svg, .hbar svg { width: 9px; height: 9px; margin: 4px; }
.up { transform: rotate(180deg); }
.left { transform: rotate(90deg); }
.right, .kids .exp { transform: rotate(-90deg); }
.vbar .end { margin-top: auto; }
.thumb { width: 15px; background: #cdcdcd; }
.tall { height: 178px; }
.short { height: 17px; }
.medium { height: 67px; }
.dim { color: #b8b8b8; }
.dim svg { margin: 1px; }

/* Document */
.doc { display: flex; flex-direction: column; flex: 1; min-width: 0; background: #fff; font-family: "Liberation Sans", Arial, sans-serif; border-top: 1px solid #555; }
.colhead { display: flex; justify-content: space-between; flex: none; height: 24px; border-bottom: 1px solid #666; }
.cols { display: flex; width: 726px; margin-left: 1px; border: 1px solid #000; border-bottom: 0; font-size: 9px; line-height: 21px; text-align: center; }
.code { width: 44px; border-right: 1px solid #000; }
.desig { flex: 1; padding-right: 2px; }
.docbody { display: flex; justify-content: space-between; flex: 1; min-height: 0; }
.paper { display: flex; flex-direction: column; width: 726px; margin-left: 1px; padding-top: 4px; overflow: hidden; text-align: center; }
.banner { flex: none; height: 75px; border: 1px solid #12264c; background: #d2e0f6; color: #3b44f2; font-weight: bold; font-size: 16px; line-height: 37px; }
.plum { color: #84405c; }
.onglet { flex: none; height: 38px; border: 1px solid #8b0a14; background: #ece9d8; font-size: 19px; line-height: 37px; }
.garde { flex: none; height: 54px; margin: 1px 0 19px; border: dashed #000; border-width: 1px 0; color: #808080; font-size: 13px; line-height: 21px; }
.garde p + p { line-height: 43px; }
.garde .red { color: #f00; font-weight: bold; height: 21px; }
.cover { display: grid; grid-template-columns: 302px 1fr; flex: 1 0 1100px; border: 1px solid #000; }
.credits { display: grid; grid-template-columns: 75px 1fr; grid-template-rows: 253px 1fr; padding-top: 687px; margin-left: 1px; background: #dedede; text-align: left; font-size: 9px; line-height: 12px; }
.credits h3 { color: #808080; font-weight: bold; font-size: 10px; }
.credits p { padding: 0 0 12px 24px; }
.parties { padding: 1px 0 0 4px; }
.holder { grid-column: 1 / 3; padding: 15px 0 0 79px; margin-right: 3px; border-top: 1px solid #808080; }
.logo { display: flex; flex-direction: column; align-items: center; width: 113px; height: 113px; overflow: hidden; background: #cb141e; color: #fff; }
.logo b { font: bold 51px/60px "Roboto Condensed", "Open Sans Condensed", "Liberation Sans Narrow", "Liberation Sans", sans-serif; }
.logo span { margin-top: -9px; font: bold 10px/14px "Liberation Sans", sans-serif; }
.front .logo { margin-right: 12px; }
.logo.small { width: 73px; height: 73px; margin: 12px 0 0 1px; }
.logo.small b { font-size: 33px; line-height: 38px; }
.logo.small span { margin-top: -5px; font-size: 7px; line-height: 10px; }
.front { display: flex; flex-direction: column; align-items: center; padding: 10px 4px 0 0; }
.large { font-size: 19px; line-height: 22px; }
.strong { font-weight: bold; }
.name { margin-top: 48px; }
.address { margin-top: 67px; }
.front h3 { margin: 226px 8px 0 0; color: #808080; font-size: 11px; line-height: 15px; font-weight: bold; }
.owner { margin: 15px 8px 6px 0; font-size: 12px; line-height: 15px; }
.lot { margin-bottom: 18px; }
.stamp { width: 325px; height: 84px; margin: 57px 0 27px; border: 1px solid #000; border-radius: 18px; background: #dedede; line-height: 82px; }
.front table { border-collapse: collapse; font-size: 11px; }
.front th, .front td { width: 92px; height: 19px; padding: 0; border: 1px solid #000; font-weight: normal; line-height: 13px; }
.hbar { display: flex; align-items: center; flex: none; height: 18px; margin-bottom: 1px; background: #f0f0f0; color: #505050; }
.hbar i { width: 17px; height: 15px; background: #cdcdcd; }
.hbar .end { margin-left: auto; }

/* Floating plan window */
.plan { position: absolute; left: 1183px; top: 465px; width: 200px; height: 301px; display: flex; flex-direction: column; padding: 0 3px 3px; border: 1px solid #858993; border-top-color: #e9edf6; border-left-color: #e0e4ec; border-width: 1px 2px 2px 1px; background: #e9edf6; }
.plan > header { display: flex; align-items: center; justify-content: space-between; height: 27px; padding: 4px 3px 0 0; color: #444; white-space: nowrap; }
.plan h2 { font-size: 10px; font-weight: bold; margin-left: 3px; }
.plan-body { display: flex; flex-direction: column; flex: 1; min-height: 0; padding: 6px 3px 4px; background: #cfd3dc; }
.plan-tools { display: flex; height: 38px; padding-left: 2px; }
.plan-tools button { display: grid; place-items: center; width: 31px; height: 29px; }
.plan-tools .on { background: #a6c6e6; border: 1px solid #76b2e8; }
.plan-tools .setup { margin-left: auto; color: #5f7784; }
.plan-tree { display: flex; flex: 1; min-height: 0; border: 1px solid #828790; background: #fff; font-family: "Liberation Sans", Arial, sans-serif; font-size: 12px; }
.plan-list { flex: 1; overflow: hidden; white-space: nowrap; }
.plan-head { display: flex; align-items: center; justify-content: space-between; height: 24px; padding: 0 9px 0 4px; font-family: "Open Sans", sans-serif; border-right: 1px solid #ddd; }
.plan-head .caret { width: 7px; height: 4px; }
.node { display: flex; align-items: center; height: 17px; color: #000080; }
.root { height: 22px; color: #008000; padding-left: 6px; }
.node .exp { width: 10px; height: 10px; color: #666; }
.pic { width: 18px; height: 18px; margin: 0 6px 0 8px; }
.kids { margin-left: 10px; padding-left: 15px; border-left: 2px solid #6b5650; }
.kids .exp { margin-right: 7px; color: #aaa; }
.locked { height: 20px; }
.padlock { width: 12px; height: 15px; margin: 0 8px 0 2px; }
.plan .vbar { width: 16px; }

/* Docking guides */
.guide { position: absolute; display: grid; place-items: end center; width: 31px; height: 32px; padding-bottom: 4px; border: 1px solid #a8a8a8; border-radius: 4px; background: linear-gradient(rgba(255,255,255,.7), rgba(246,246,246,.7) 50%, rgba(222,222,222,.75) 52%, rgba(230,230,230,.75)); box-shadow: 0 0 0 2px rgba(255,255,255,.8); }
.guide svg { width: 12px; height: 8px; }
.g-top { left: calc(50% - 15px); top: 17px; }
.g-bottom { left: calc(50% - 15px); bottom: 19px; }
.g-left { left: 18px; top: calc(50% - 16px); }
.g-right { right: 18px; top: calc(50% - 16px); }
.g-bottom, .c-down { place-items: start center; padding: 4px 0 0; }
.g-bottom svg, .c-down svg { transform: rotate(180deg); }
.g-left, .c-left { place-items: center end; padding: 0 2px 0 0; }
.g-left svg, .c-left svg { transform: rotate(-90deg); }
.g-right, .c-right { place-items: center start; padding: 0 0 0 2px; }
.g-right svg, .c-right svg { transform: rotate(90deg); }
.mark { position: absolute; border: 2px solid #f01010; border-radius: 6px; box-shadow: 3px 3px 8px rgba(0,0,0,.25), inset 2px 2px 8px rgba(0,0,0,.2); pointer-events: none; }
.m-top { left: calc(50% - 38px); top: 4px; width: 82px; height: 60px; }
.m-left { left: 8px; top: calc(50% - 25px); width: 65px; height: 55px; }
.m-cross { left: 1417px; top: 534px; width: 138px; height: 167px; }
.compass { position: absolute; left: 28px; top: 46px; width: 74px; height: 72px; border: 1px solid #bbb; border-radius: 18px; background: linear-gradient(#fff, #eee 50%, #e0e0e0); }
.c-up { left: 20px; top: -18px; }
.c-down { left: 20px; bottom: -18px; }
.c-left { left: -17px; top: 19px; }
.c-right { right: -18px; top: 19px; }
.pointer { position: absolute; left: 0; top: 0; filter: drop-shadow(2px 4px 4px rgba(0,0,0,.4)); pointer-events: none; }

/* Status bar */
.status { display: flex; align-items: center; flex: none; height: 24px; border-top: 1px solid #a2a7b3; background: linear-gradient(#dde0e6, #b8bcc4 10px, #a4a8b0 11px, #b4b7c2); padding: 0 5px 0 3px; color: #1c1e28; white-space: nowrap; }
.msg { flex: 1; color: #000; }
.cell { display: flex; align-items: center; height: 21px; border-left: 1px solid #858a94; box-shadow: inset 1px 0 0 #d8dae0; }
.spare { width: 189px; }
.commun { width: 68px; padding-left: 12px; }
.role { width: 130px; padding-left: 12px; }
.chips { padding: 0 4px 0 2px; }
.chip { display: grid; grid-auto-flow: column; place-items: center; height: 21px; border: 1px solid #9fb4b8; border-radius: 2px; background: linear-gradient(#eceef2, #d2d5db 50%, #e4e6ea); color: #8d9097; }
.lockchip { width: 24px; }
.empty { width: 12px; }
.keys { width: 92px; }
.lit { color: #333; }
.pct { margin: 0 17px 0 6px; width: 28px; }
.round { display: grid; place-items: center; width: 16px; height: 16px; border: 1px solid #555; border-radius: 50%; background: linear-gradient(#fff, #c8cad0); }
.zoom { appearance: none; width: 86px; height: 16px; margin: 0 7px; background: linear-gradient(#f4f4f4, #f4f4f4) center / 100% 1px no-repeat; }
.zoom::-webkit-slider-thumb { appearance: none; width: 9px; height: 13px; border: 1px solid #444; background: #eee; border-radius: 1px 1px 5px 5px; }
```
